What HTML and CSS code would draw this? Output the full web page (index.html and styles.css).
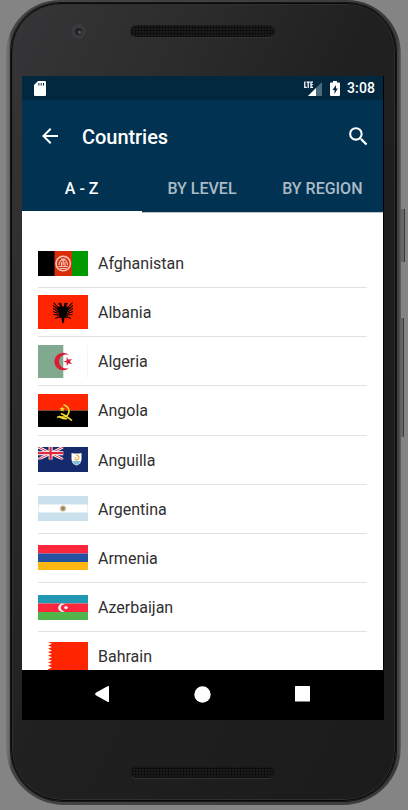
FILE: index.html
```
<!DOCTYPE html>
<html lang="en">
<head>
<meta charset="utf-8">
<title>Countries</title>
<link rel="stylesheet" href="styles.css">
</head>
<body>
<div class="phone">
  <div class="body">
    <div class="bezel top"><span class="camera"></span><span class="speaker"></span></div>
    <div class="screen">
      <div class="status">
        <svg class="sd" width="12" height="15" viewBox="0 0 12 15"><path fill="#fff" d="M4 0h7q1 0 1 1v13q0 1-1 1H1q-1 0-1-1V4z"/><path stroke="#01283f" stroke-width="1" d="M4.900 2v2.600M7.200 2v2.600M9.500 2v2.600"/></svg>
        <svg class="signal" width="18" height="15" viewBox="0 0 18 15"><path fill="#4c697d" d="M18 1v14H4z"/><path fill="#01283f" d="M0 0h10v7.500H0z"/><path fill="#fff" d="M12 7v8H4z"/><path fill="none" stroke="#fff" stroke-width="1.300" d="M.8.5v5.900h2M2.500 1.100h3.400M4.200 1v6M9 1.100H7v5.300h2M7 3.700h1.800"/></svg>
        <svg class="battery" width="10" height="15" viewBox="0 0 10 15"><path fill="#fff" d="M3 0h4v1.500h2q1 0 1 1V14q0 1-1 1H1q-1 0-1-1V2.500q0-1 1-1h2z"/><path fill="#01283f" d="M6 4 2.500 9h2v4L7.700 7.500H6z"/></svg>
        <span class="clock">3:08</span>
      </div>
      <header class="appbar">
        <svg class="back" width="24" height="24" viewBox="0 0 24 24"><path fill="#fff" d="M20 11H7.830l5.590-5.590L12 4l-8 8 8 8 1.410-1.410L7.830 13H20z"/></svg>
        <h1>Countries</h1>
        <svg class="search" width="25" height="25" viewBox="0 0 24 24"><path fill="#fff" d="M15.500 14h-.79l-.28-.27A6.471 6.471 0 0 0 16 9.500 6.500 6.500 0 1 0 9.500 16c1.610 0 3.090-.59 4.230-1.570l.27.28v.79l5 4.990L20.490 19zm-6 0C7.010 14 5 11.990 5 9.500S7.010 5 9.500 5 14 7.010 14 9.500 11.990 14 9.500 14z"/></svg>
      </header>
      <nav class="tabs"><span class="tab active">A - Z</span><span class="tab">BY LEVEL</span><span class="tab">BY REGION</span></nav>
      <main class="list">
        <div class="row"><svg class="flag" width="50" height="25" viewBox="0 0 50 25"><path d="M0 0h17v25H0z"/><path fill="#d92d09" d="M16.500 0h17.500v25H16.500z"/><path fill="#009a00" d="M34 0h16v25H34z"/><g fill="none" stroke="#f3c4b7"><circle cx="25.200" cy="12.500" r="7.200" stroke-width="1.600"/><path stroke-width="1.200" d="M21 14q0-5 4.200-5t4.200 5M20.500 15.500h9.500M22 17.500h6.500M23.500 11v4M27 11v4M23 8h4.500M25.200 9v5"/></g></svg><span>Afghanistan</span></div>
        <div class="row"><svg class="flag" width="50" height="34" viewBox="0 0 50 34"><path fill="#ff2500" d="M0 0h50v34H0z"/><path d="M25 12l-1.500-2 .5-1.500L21.500 7.500 20 9l1.500.8v2.700L19.500 11v3l1.500 5-1.500 2 2.500-.5-1 3 2.500-1 .3 3.500L25 29l1.200-3 .3-3.500 2.500 1-1-3 2.500.5-1.500-2 1.500-5v-3l-2 1.500V9.800L30 9l-1.500-1.500L26 8.500l.5 1.500z"/><path fill="none" stroke="#000" stroke-width="1.100" d="m20.500 13-5-5.500M20.500 15l-5.500-4.500M20.500 17 15 13.500M20.500 18.500 15 16.500M20.500 20l-5-.5M21.500 21.500l-4.500 2M29.500 13l5-5.500M29.500 15l5.500-4.500M29.500 17l5.500-3.500M29.500 18.500l5.500-2M29.500 20l5-.5M28.500 21.500l4.500 2"/></svg><span>Albania</span></div>
        <div class="row"><svg class="flag" width="50" height="33" viewBox="0 0 50 33"><path fill="#fff" d="M0 0h50v33H0z"/><path fill="#80a98f" d="M0 0h25.300v33H0z"/><path fill="#eee" d="M49.500 0h.5v33h-.5z"/><path fill="#dc1c35" d="M31.500 10.400a8.800 8.800 0 1 0 0 12.200 7 7 0 1 1 0-12.200z"/><path fill="#dc1c35" d="m25.500 16.500 3.200-1.100V12l2 2.700 3.300-1-2 2.800 2 2.800-3.300-1-2 2.700v-3.400z"/></svg><span>Algeria</span></div>
        <div class="row"><svg class="flag" width="50" height="33" viewBox="0 0 50 33"><path fill="#ff2500" d="M0 0h50v16.500H0z"/><path d="M0 16.500h50V33H0z"/><path fill="none" stroke="#f7df2b" stroke-width="1.700" d="M25.500 10.800q5.500 1.700 5.500 6.700-.8 5.700-6.500 5.700-2 0-3.500-1"/><path fill="none" stroke="#f7df2b" stroke-width="1.500" d="M19.200 23.700q1.500-1.700 3.500-.2 3 1.500 6.500 1M23 19.500l5 2.500 6 4.700"/><path fill="#f7df2b" d="m24.200 12.300.8 1.900 2 .1-1.600 1.300.5 2-1.700-1.100-1.700 1.100.5-2-1.600-1.300 2-.1z"/></svg><span>Angola</span></div>
        <div class="row"><svg class="flag" width="50" height="25" viewBox="0 0 50 25"><path fill="#152a6c" d="M0 0h50v25H0z"/><svg width="25.300" height="12.500" viewBox="0 0 25.300 12.500"><path stroke="#fff" stroke-width="2.800" d="m0 0 25.300 12.500M0 12.500 25.300 0"/><path stroke="#e02b3d" stroke-width="1" d="m0 0 25.300 12.500M0 12.500 25.300 0"/><path stroke="#fff" stroke-width="4" d="M12.600 0v13M0 6.200h26"/><path stroke="#e02b3d" stroke-width="2.300" d="M12.600 0v13M0 6.200h26"/></svg><path fill="#fff" d="M33.500 6q5 1 10 0v6q0 5-5 6.500-5-1.500-5-6.500z"/><path fill="#81bed7" d="M34 14h9q-1 3-4.500 4-3.500-1-4.500-4z"/><path fill="none" stroke="#e7a83b" stroke-width="1.200" d="M36.500 12.500q4 1.500 4.500-2 0-2-3-2.500m-1.500 2.500 2 .7"/></svg><span>Anguilla</span></div>
        <div class="row"><svg class="flag" width="50" height="25" viewBox="0 0 50 25"><path fill="#cae0ed" d="M0 0h50v25H0z"/><path fill="#fff" d="M.5 8.500h49v8H.5z"/><circle cx="25" cy="12.500" r="2.900" fill="#bcad83"/><circle cx="25" cy="12.500" r="1.500" fill="#958257"/></svg><span>Argentina</span></div>
        <div class="row"><svg class="flag" width="50" height="25" viewBox="0 0 50 25"><path fill="#fc273d" d="M0 0h50v8.500H0z"/><path fill="#2452a3" d="M0 8.500h50v8.500H0z"/><path fill="#ffb714" d="M0 17h50v8H0z"/></svg><span>Armenia</span></div>
        <div class="row"><svg class="flag" width="50" height="25" viewBox="0 0 50 25"><path fill="#2297b2" d="M0 0h50v8.500H0z"/><path fill="#fc273d" d="M0 8.500h50V17H0z"/><path fill="#52b54b" d="M0 17h50v8H0z"/><path fill="#fff" d="M27 9.700a4 4 0 1 0 0 6 3.200 3.200 0 1 1 0-6z"/><circle cx="28" cy="12.600" r="1.700" fill="#fff"/></svg><span>Azerbaijan</span></div>
        <div class="row"><svg class="flag" width="50" height="28" viewBox="0 0 50 28"><path fill="#ff2500" d="M50 0H10l4 1.700-4 1.700 4 1.700-4 1.700 4 1.700-4 1.700 4 1.700-4 1.700 4 1.700-4 1.700 4 1.700-4 1.700 4 1.700-4 1.700 4 1.700-4 1.700V28h40z"/></svg><span>Bahrain</span></div>
      </main>
      <div class="navbar">
        <svg width="16" height="18" viewBox="0 0 16 18"><path fill="#fff" d="M15 1v16q-1 0-2-.6L1.800 10.200q-1.600-1.200 0-2.400L13 1.600q1-.6 2-.6z"/></svg>
        <svg width="17" height="17" viewBox="0 0 17 17"><circle cx="8.500" cy="8.500" r="8.200" fill="#fff"/></svg>
        <svg width="15" height="16" viewBox="0 0 15 16"><rect width="15" height="15.500" rx=".6" fill="#fff"/></svg>
      </div>
    </div>
    <div class="bezel bottom"><span class="speaker"></span></div>
  </div>
  <i class="key power"></i><i class="key volume"></i>
</div>
</body>
</html>
```
FILE: styles.css
```
* { box-sizing: border-box; }
body { margin: 0; height: 810px; overflow: hidden; background: #848484; font-family: Roboto, sans-serif; }
svg { display: block; flex: none; }
.phone {
  position: relative; width: 395px; height: 805px; margin-left: 6px; padding: 3px 5px 4px;
  border-radius: 54px 54px 58px 58px;
  background: linear-gradient(90deg, #777 0, #696969 3px, #444 5px, #3b3b3b 390px, #464344 393px, #666 395px);
}
.body {
  height: 798px; border-radius: 49px 49px 52px 52px; border: 1px solid #080808; padding: 0 10px;
  background: linear-gradient(115deg, #363638 0, #2c2c2d 25%, #202020 48%, #1b1b1c 100%);
  box-shadow: inset 0 0 0 1px #303030, 0 0 0 1px #161616;
}
.bezel { display: flex; }
.top { height: 72px; padding: 20px 0 0 49px; }
.camera { width: 15px; height: 15px; border-radius: 50%; border: 4px solid #3a3a3a; background: radial-gradient(circle at 65% 60%, #66505d 0 1px, #20202b 2px); }
.speaker {
  width: 145px; height: 13px; border-radius: 7px; border: 1px solid #1a1a1a; border-bottom-color: #333;
  background: radial-gradient(circle, #0a0a0a 0 .8px, #1e1e1e 1.5px) 0 0 / 3px 3px;
}
.top .speaker { margin: 1px 0 0 44px; }
.bottom { padding: 46px 0 0 108px; }
.screen { width: 362px; height: 644px; background: #fff; border-right: 1px solid #000; display: flex; flex-direction: column; }
.status { height: 24px; background: #01283f; display: flex; align-items: center; padding: 0 8px 0 12px; color: #fff; }
.signal { margin-left: auto; }
.battery { margin-left: 8px; }
.clock { margin-left: 7px; font-size: 14px; font-weight: 500; letter-spacing: .1px; }
.appbar { height: 65px; background: #013252; display: flex; align-items: center; padding: 7px 12px 0 16px; color: #fff; }
.appbar h1 { margin: 1px 0 0 20px; font-size: 20px; font-weight: 500; line-height: 24px; letter-spacing: -.05px; }
.search { margin-left: auto; }
.tabs { height: 48px; background: #013252; border-bottom: 1px solid #bcc3c9; display: grid; grid-template-columns: repeat(3, 1fr); }
.tab { display: flex; align-items: center; justify-content: center; padding-right: 1px; color: #aabbc6; font-size: 16px; font-weight: 500; }
.active { color: #fff; box-shadow: inset 0 -1px #fff, 0 1px #fff; }
.list { flex: 1; min-height: 0; overflow: hidden; padding: 26px 16px 0; }
.row { height: 49.150px; border-bottom: 1px solid #e1e1e1; display: flex; align-items: center; gap: 10px; color: #303030; font-size: 16px; }
.row span { padding-top: 1px; }
.navbar { height: 50px; flex: none; margin-right: -1px; background: #000; display: flex; align-items: center; justify-content: space-between; padding: 0 74px 2px 72px; }
.key { position: absolute; left: 395px; width: 4px; background: #666; border-right: 1px solid #393939; }
.power { top: 209px; height: 53px; }
.volume { top: 318px; height: 119px; width: 3px; }
```
